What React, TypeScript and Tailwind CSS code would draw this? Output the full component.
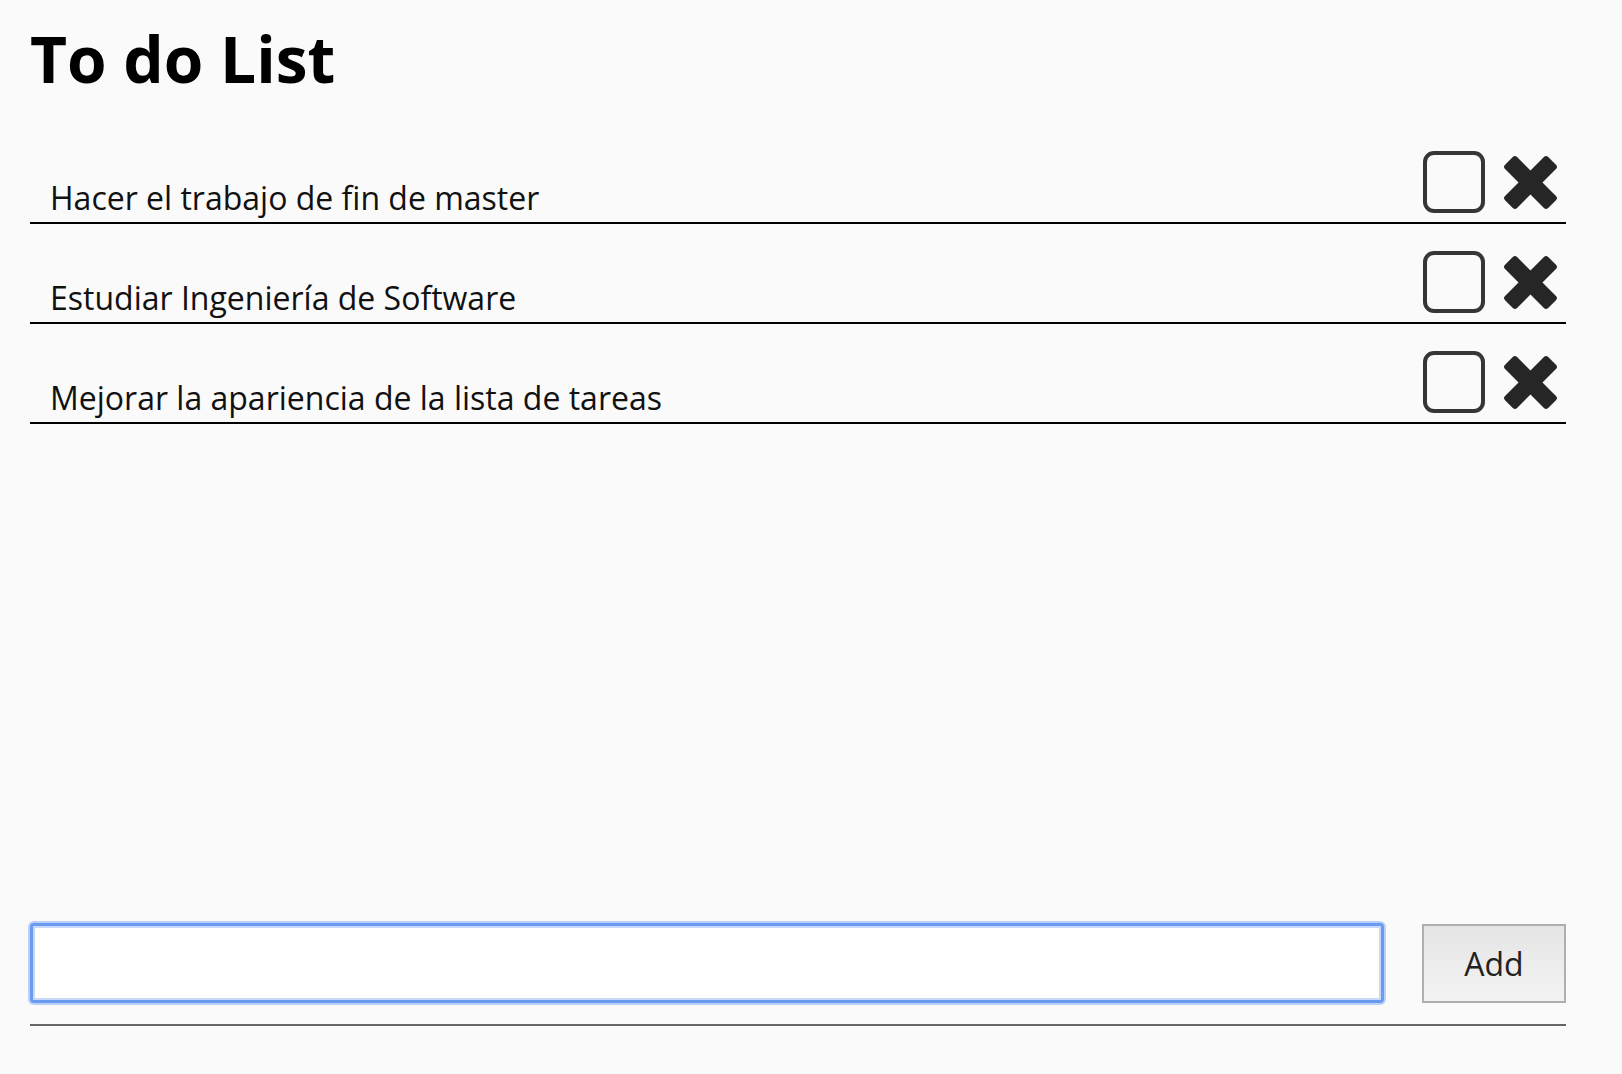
import React from "react";

const tasks = [
  "Hacer el trabajo de fin de master",
  "Estudiar Ingeniería de Software",
  "Mejorar la apariencia de la lista de tareas",
];

function Cross() {
  return (
    <svg width="55" height="55" viewBox="0 0 55 55" aria-hidden="true">
      <g fill="#262626">
        <rect x="-3" y="19" width="61" height="17" rx="3" transform="rotate(45 27.5 27.5)" />
        <rect x="-3" y="19" width="61" height="17" rx="3" transform="rotate(-45 27.5 27.5)" />
      </g>
    </svg>
  );
}

export default function App() {
  return (
    <div className="min-h-screen bg-[#fafafa] font-['Open_Sans',sans-serif] text-black">
      <div className="ml-[30px] flex min-h-screen w-[1536px] flex-col">
        <h1 className="mt-[27px] h-[64px] text-[64px] font-bold leading-[64px]">
          To do List
        </h1>
        <ul className="mt-[33px] flex flex-1 flex-col">
          {tasks.map((t) => (
            <li
              key={t}
              className="flex h-[100px] items-start justify-between border-b-2 border-black"
            >
              <span className="self-end pb-[8px] pl-[20px] text-[32px] leading-[32px] text-[#111]">
                {t}
              </span>
              <div className="mr-[8px] mt-[27px] flex items-center gap-[18px]">
                <div className="h-[62px] w-[62px] rounded-[11px] border-[4px] border-[#363636]" />
                <Cross />
              </div>
            </li>
          ))}
        </ul>
        <div className="pb-[48px]">
          <div className="flex items-center gap-[38px] border-b-2 border-[#666] pb-[21px]">
            <input
              type="text"
              className="h-[80px] flex-1 rounded-[4px] border-[3px] border-[#6a9bf0] bg-white px-3 text-[32px] shadow-[0_0_0_2px_#bad0f7,inset_0_0_0_2px_#c8d8f8] outline-none"
            />
            <button className="mt-[1px] h-[79px] w-[144px] border-2 border-[#afafaf] bg-gradient-to-b from-[#e5e5e5] to-[#f3f3f3] text-[32px] leading-none text-[#222]">
              Add
            </button>
          </div>
        </div>
      </div>
    </div>
  );
}
